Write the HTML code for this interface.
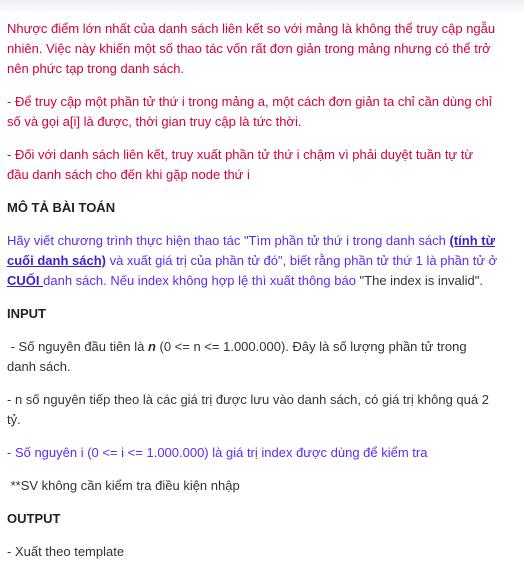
<!DOCTYPE html>
<html><head><meta charset="utf-8"><style>
html,body{margin:0;padding:0;background:#fff;width:524px;height:580px;overflow:hidden}
body{font-family:"Liberation Sans","DejaVu Sans",sans-serif;font-size:13px;line-height:20px;color:#333;position:relative}
.top{position:absolute;left:0;top:0;width:524px;height:14px;background:linear-gradient(#eef0f3,#f6f7f9 60%,#fff)}
.c{position:absolute;left:7px;top:19px;width:515px}
p{margin:0 0 13px;white-space:nowrap}
.r{color:#d3003f}
.b{color:#5a2cf0}
h{font-weight:bold;color:#222;display:block}
a{color:#3b1fd0;font-weight:bold;text-decoration:underline}
</style></head><body>
<div class="top"></div>
<div class="c">
<p class="r">Nhược điểm lớn nhất của danh sách liên kết so với mảng là không thể truy cập ngẫu<br>nhiên. Việc này khiến một số thao tác vốn rất đơn giản trong mảng nhưng có thể trở<br>nên phức tạp trong danh sách.</p>
<p class="r">- Để truy cập một phần tử thứ i trong mảng a, một cách đơn giản ta chỉ cần dùng chỉ<br>số và gọi a[i] là được, thời gian truy cập là tức thời.</p>
<p class="r">- Đối với danh sách liên kết, truy xuất phần tử thứ i chậm vì phải duyệt tuần tự từ<br>đầu danh sách cho đến khi gặp node thứ i</p>
<p><h>MÔ TẢ BÀI TOÁN</h></p>
<p class="b">Hãy viết chương trình thực hiện thao tác "Tìm phần tử thứ i trong danh sách <a>(tính từ<br>cuối danh sách)</a> và xuất giá trị của phần tử đó", biết rằng phần tử thứ 1 là phần tử ở<br><a>CUỐI </a>danh sách. Nếu index không hợp lệ thì xuất thông báo <span style="color:#333">"The index is invalid".</span></p>
<p><h>INPUT</h></p>
<p>&nbsp;- Số nguyên đầu tiên là <b><i>n</i></b> (0 &lt;= n &lt;= 1.000.000). Đây là số lượng phần tử trong<br>danh sách.</p>
<p>- n số nguyên tiếp theo là các giá trị được lưu vào danh sách, có giá trị không quá 2<br>tỷ.</p>
<p class="b">- Số nguyên i (0 &lt;= i &lt;= 1.000.000) là giá trị index được dùng để kiểm tra</p>
<p>&nbsp;**SV không cần kiểm tra điều kiện nhập</p>
<p><h>OUTPUT</h></p>
<p>- Xuất theo template</p>
</div>
</body></html>
